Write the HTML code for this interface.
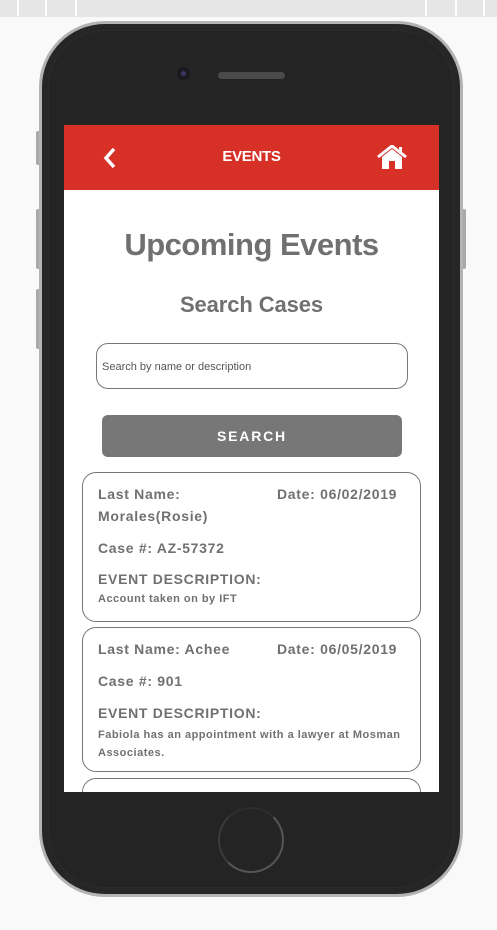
<!DOCTYPE html>
<html><head><meta charset="utf-8"><style>
*{margin:0;padding:0;box-sizing:border-box}
body{width:497px;height:930px;background:#f9f9f9;position:relative;overflow:hidden;font-family:"Liberation Sans",sans-serif}
.top{position:absolute;left:0;top:0;width:497px;height:17px;background:#e6e6e6}
.top i{position:absolute;top:0;width:2px;height:16px;background:#fff}
.btn{position:absolute;background:#a9a9ad;border-radius:2px}
.phone{position:absolute;left:39px;top:21px;width:424px;height:876px;border-radius:66px;background:#b3b3b3}
.inner{position:absolute;left:3px;top:3px;right:3px;bottom:3px;border-radius:63px;background:#262626}
.inner2{position:absolute;left:6px;top:6px;right:6px;bottom:6px;border-radius:57px;background:#242424;border:1px solid #2c2c2c}
.screen{position:absolute;left:64px;top:125px;width:375px;height:667px;background:#fff;overflow:hidden;color:#707070}
.hdr{height:65px;background:#d63027;position:relative;color:#fff}
.hdr .t{position:absolute;left:0;right:0;top:23px;text-align:center;font-weight:bold;font-size:15px;letter-spacing:-.3px}
h1{text-align:center;font-size:31px;font-weight:900;margin-top:37px;letter-spacing:-.5px}
h2{text-align:center;font-size:22px;font-weight:900;margin-top:29px;letter-spacing:-.1px}
.inp{position:absolute;left:32px;top:218px;width:312px;height:46px;border:1px solid #777;border-radius:12px;font-size:11px;color:#555;padding:17px 0 0 5px}
.sb{position:absolute;left:38px;top:290px;width:300px;height:42px;background:#777;border-radius:6px;color:#fff;font-weight:bold;font-size:14px;letter-spacing:1.8px;text-align:center;line-height:42px}
.card{position:absolute;left:18px;width:339px;border:1px solid #777;border-radius:14px;font-weight:bold;font-size:14px;letter-spacing:.7px}
.card div{position:absolute;white-space:nowrap}
.card .s{font-size:11px;letter-spacing:.5px}
</style></head><body>
<div class="top"><i style="left:17px"></i><i style="left:45px"></i><i style="left:75px"></i><i style="left:425px"></i><i style="left:455px"></i><i style="left:483px"></i></div>
<div class="btn" style="left:36px;top:131px;width:4px;height:34px"></div>
<div class="btn" style="left:36px;top:209px;width:4px;height:60px"></div>
<div class="btn" style="left:36px;top:289px;width:4px;height:60px"></div>
<div class="btn" style="left:462px;top:209px;width:4px;height:60px"></div>
<div class="phone"><div class="inner"><div class="inner2"></div></div></div>
<div style="position:absolute;left:177px;top:67px;width:13px;height:13px;border-radius:50%;background:#1a1a1e"></div>
<div style="position:absolute;left:181px;top:71px;width:5px;height:5px;border-radius:50%;background:#3e3660"></div>
<div style="position:absolute;left:218px;top:72px;width:67px;height:7px;border-radius:4px;background:#4a4a4a"></div>
<div style="position:absolute;left:218px;top:807px;width:66px;height:66px;border-radius:50%;border:2px solid #555;border-top-color:#2e2e2e;border-left-color:#3a3a3a"></div>
<div class="screen">
<div class="hdr">
<svg style="position:absolute;left:38px;top:22px" width="16" height="22" viewBox="0 0 16 22"><path d="M12 2 L4 11 L12 20" fill="none" stroke="#fff" stroke-width="3.5"/></svg>
<div class="t">EVENTS</div>
<svg style="position:absolute;left:313px;top:20px" width="30" height="24" viewBox="0 0 30 24"><path d="M1 12 L15 1 L29 12" fill="none" stroke="#fff" stroke-width="3"/><path d="M5 12 L15 4 L25 12 V24 H18 V16 H12 V24 H5Z" fill="#fff"/><rect x="22" y="2" width="3" height="7" fill="#fff"/></svg>
</div>
<h1>Upcoming Events</h1>
<h2>Search Cases</h2>
<div class="inp">Search by name or description</div>
<div class="sb">SEARCH</div>
<div class="card" style="top:347px;height:150px">
<div style="left:15px;top:13px">Last Name:</div><div style="left:194px;top:13px">Date: 06/02/2019</div>
<div style="left:15px;top:35px">Morales(Rosie)</div>
<div style="left:15px;top:67px">Case #: AZ-57372</div>
<div style="left:15px;top:98px">EVENT DESCRIPTION:</div>
<div class="s" style="left:15px;top:120px">Account taken on by IFT</div>
</div>
<div class="card" style="top:502px;height:145px">
<div style="left:15px;top:13px">Last Name: Achee</div><div style="left:194px;top:13px">Date: 06/05/2019</div>
<div style="left:15px;top:45px">Case #: 901</div>
<div style="left:15px;top:77px">EVENT DESCRIPTION:</div>
<div class="s" style="left:15px;top:98px;line-height:18px">Fabiola has an appointment with a lawyer at Mosman<br>Associates.</div>
</div>
<div class="card" style="top:653px;height:60px"></div>
</div>
</body></html>
